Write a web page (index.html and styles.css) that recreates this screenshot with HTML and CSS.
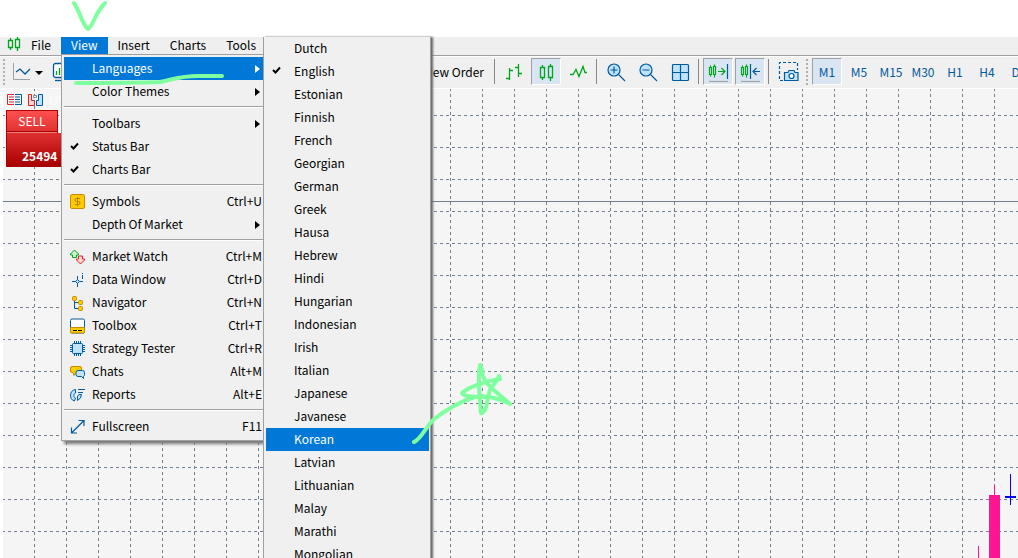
FILE: index.html
```html
<!DOCTYPE html>
<html lang="en">
<head>
<meta charset="utf-8">
<title>Trading Terminal</title>
<link rel="stylesheet" href="styles.css">
</head>
<body>
<div class="app">
  <nav class="menubar" aria-label="Main menu">
    <svg class="logo" width="14" height="14" viewBox="0 0 14 14" fill="none" stroke="#00a51d" stroke-width="1.300"><path d="M1.500 3.500h4v7h-4zM3.500 1v2.500M3.500 10.500V13M8.500 2.500h4v8h-4zM10.500 0v2.500M10.500 10.500V14"/></svg>
    <button class="top-item">File</button>
    <button class="top-item open">View</button>
    <button class="top-item">Insert</button>
    <button class="top-item">Charts</button>
    <button class="top-item">Tools</button>
  </nav>

  <div class="toolbar" role="toolbar" aria-label="Chart tools">
    <div class="tools-left">
      <span class="grip"></span>
      <button class="tool line-tool" aria-label="Chart type"><svg width="32" height="20" viewBox="0 0 32 20" fill="none"><path d="M2.500 1v16.500H19" stroke="#a0a0a0"/><path d="M5 10l4-3 5 5 5-5" stroke="#005a9e" stroke-width="1.300"/><path d="M24 9h8l-4 4z" fill="#000"/></svg></button>
      <button class="tool" aria-label="Indicators"><svg width="20" height="20" viewBox="0 0 20 20" fill="none" stroke="#005a9e" stroke-width="1.300"><rect x="1.500" y="1.500" width="15" height="14" rx="2" fill="#fff"/><path d="M3 18.500h13"/><path d="M4.500 13V9m3 4V6m3 7V9" stroke="#00a51d"/></svg></button>
      <button class="tool new-order">New Order</button>
    </div>
    <span class="sep"></span>
    <button class="tool" aria-label="Bar chart"><svg width="20" height="20" viewBox="0 0 20 20" fill="none" stroke="#00a51d" stroke-width="1.300"><path d="M5.500 6v12M2 16.500h3.500M5.500 8.500H9M14.500 2v13M11 5.500h3.500M14.500 11.500H18"/></svg></button>
    <button class="tool pressed" aria-label="Candlesticks"><svg width="20" height="20" viewBox="0 0 20 20" fill="none" stroke="#00a51d" stroke-width="1.300"><path d="M4.500 5.500h4v10h-4zM6.500 3v2.500M6.500 15.500V18M12.500 4.500h4v11h-4zM14.500 2v2.500M14.500 15.500V19"/></svg></button>
    <button class="tool" aria-label="Line chart"><svg width="20" height="20" viewBox="0 0 20 20" fill="none" stroke="#00a51d" stroke-width="1.300"><path d="M2 12.500h3l3-5 3 7 4-10 2 6h2"/></svg></button>
    <span class="sep"></span>
    <button class="tool" aria-label="Zoom in"><svg width="20" height="20" viewBox="0 0 20 20" fill="none" stroke="#005a9e" stroke-width="1.200"><circle cx="8" cy="8" r="6" fill="#bde3ff"/><path d="M12.500 12.500L19 19M4.500 8h7M8 4.500v7"/></svg></button>
    <button class="tool" aria-label="Zoom out"><svg width="20" height="20" viewBox="0 0 20 20" fill="none" stroke="#005a9e" stroke-width="1.200"><circle cx="8" cy="8" r="6" fill="#bde3ff"/><path d="M12.500 12.500L19 19M4.500 8h7"/></svg></button>
    <button class="tool" aria-label="Tile windows"><svg width="20" height="20" viewBox="0 0 20 20" fill="#bde3ff" stroke="#005a9e" stroke-width="1.200"><rect x="2.500" y="2.500" width="16" height="16" rx="1"/><path d="M10.500 2.500v16M2.500 10.500h16"/></svg></button>
    <span class="sep"></span>
    <button class="tool pressed" aria-label="Auto scroll"><svg width="22" height="20" viewBox="0 0 22 20" fill="none" stroke="#00a51d" stroke-width="1.200"><path d="M2.500 5.500h2v7h-2zM3.500 3.500v2M3.500 12.500v2M6.500 4.500h2v8h-2zM7.500 2.500v2M7.500 12.500v3M11 9.500h7M14.500 6l3.500 3.500-3.500 3.500"/><path d="M20.500 2v15" stroke="#005a9e"/><path d="M2 19.500h19" stroke="#a0a0a0"/></svg></button>
    <button class="tool pressed" aria-label="Chart shift"><svg width="22" height="20" viewBox="0 0 22 20" fill="none" stroke="#00a51d" stroke-width="1.200"><path d="M2.500 5.500h2v7h-2zM3.500 3.500v2M3.500 12.500v2M6.500 4.500h2v8h-2zM7.500 2.500v2M7.500 12.500v3"/><path d="M11.500 2v15M21 9.500h-7M17.500 6L14 9.500l3.500 3.500" stroke="#005a9e"/><path d="M2 19.500h19" stroke="#a0a0a0"/></svg></button>
    <span class="sep"></span>
    <button class="tool" aria-label="Screenshot"><svg width="22" height="22" viewBox="0 0 22 22" fill="none" stroke="#005a9e" stroke-width="1.200"><path d="M6 19.500H2.500v-18h18V9" stroke-dasharray="3 2"/><path d="M7.500 11.500H11l1-2h5l1 2h3v8H7.500z" fill="#bde3ff"/><circle cx="14.500" cy="15" r="2.500" fill="#fff"/></svg></button>
    <span class="grip"></span>
    <button class="tool frame pressed">M1</button>
    <button class="tool frame">M5</button>
    <button class="tool frame">M15</button>
    <button class="tool frame">M30</button>
    <button class="tool frame">H1</button>
    <button class="tool frame">H4</button>
    <button class="tool frame">D1</button>
  </div>

  <main class="chart">
    <svg class="plot" width="100%" height="100%" aria-hidden="true">
      <defs>
        <pattern id="grid" x="31" y="26" width="96" height="96" patternUnits="userSpaceOnUse">
          <path d="M.5 3v96M32.500 3v96M64.500 3v96" stroke="#708090" stroke-dasharray="3 3"/>
          <path d="M4 .5h96M4 32.500h96M4 64.500h96" stroke="#708090" stroke-dasharray="3 3"/>
        </pattern>
      </defs>
      <rect width="100%" height="100%" fill="url(#grid)"/>
      <path d="M0 112.500h4000" stroke="#708090"/>
      <path d="M975.500 457v100M991.500 396v12" stroke="#ff1493"/>
      <path d="M986 406h11v400h-11z" fill="#ff1493"/>
      <path d="M1007 385h1v31h-1zM1002 407h11v2h-11z" fill="#00f"/>
    </svg>
    <div class="chart-head">
      <svg width="15" height="12" viewBox="0 0 15 12" fill="none"><path d="M7 .5H.5v10H7M2 3h5M2 5.500h5M2 8h5" stroke="#d8262c"/><path d="M8 .5h6.500v10H8M8 3h5M8 5.500h5M8 8h5" stroke="#005a9e"/></svg>
      <svg width="15" height="12" viewBox="0 0 15 12"><path d="M.5.5h3v6h3v5h-6z" fill="#ffd5d0" stroke="#d8262c"/><path d="M14.500.5h-4v6h-2v5h6z" fill="#bde3ff" stroke="#005a9e"/><path d="M5.500 1.500h3v2h-3z" fill="#fff" stroke="#888"/></svg>
      <span class="symbol">US</span>
    </div>
    <button class="sell"><span class="sell-tab">SELL</span><span class="sell-price">25494</span></button>
  </main>

  <div class="menu view-menu" role="menu" aria-label="View">
    <button class="item active" role="menuitem"><i></i><span>Languages</span><b class="arrow"></b></button>
    <button class="item" role="menuitem"><i></i><span>Color Themes</span><b class="arrow"></b></button>
    <hr>
    <button class="item" role="menuitem"><i></i><span>Toolbars</span><b class="arrow"></b></button>
    <button class="item" role="menuitem"><i class="tick"><svg width="9" height="9" viewBox="0 0 9 9"><path d="M1 4l2.500 2.500L8 1.500" fill="none" stroke="#000" stroke-width="2"/></svg></i><span>Status Bar</span></button>
    <button class="item" role="menuitem"><i class="tick"><svg width="9" height="9" viewBox="0 0 9 9"><path d="M1 4l2.500 2.500L8 1.500" fill="none" stroke="#000" stroke-width="2"/></svg></i><span>Charts Bar</span></button>
    <hr>
    <button class="item" role="menuitem"><i><svg width="16" height="16" viewBox="0 0 16 16"><rect x=".5" y=".5" width="14" height="14" rx="1.500" fill="#fc0" stroke="#c88a00"/><path d="M10 4.500H6.500q-1.500 0-1.500 1.500t1.500 1.500h2q1.500 0 1.500 1.500t-1.500 1.500H5M7.500 3v9.500" fill="none" stroke="#b87a00"/></svg></i><span>Symbols</span><kbd>Ctrl+U</kbd></button>
    <button class="item" role="menuitem"><i></i><span>Depth Of Market</span><b class="arrow"></b></button>
    <hr>
    <button class="item" role="menuitem"><i><svg width="16" height="16" viewBox="0 0 16 16"><path d="M4.500 1L.5 5v1h2v2.500h4V6h2V5z" fill="#c9f2ce" stroke="#00a51d"/><path d="M10.500 15l-4-4v-1h2V7h4v3h2v1z" fill="#ffd5d0" stroke="#d8262c"/></svg></i><span>Market Watch</span><kbd>Ctrl+M</kbd></button>
    <button class="item" role="menuitem"><i><svg width="16" height="16" viewBox="0 0 16 16" fill="none" stroke="#005a9e"><path d="M7.500 4v11M2 9.500h11M12.500 3v4M12.500 1v1"/><path d="M7.500 7.500l2 2-2 2-2-2z" fill="#bde3ff"/></svg></i><span>Data Window</span><kbd>Ctrl+D</kbd></button>
    <button class="item" role="menuitem"><i><svg width="16" height="16" viewBox="0 0 16 16"><path d="M4.500 5v8.500H9M4.500 7.500H9" fill="none" stroke="#005a9e"/><g fill="#fc0" stroke="#c88a00"><rect x="2.500" y="1.500" width="4" height="4" rx="1"/><rect x="8.500" y="5.500" width="4" height="4" rx="1"/><rect x="8.500" y="11.500" width="4" height="4" rx="1"/></g></svg></i><span>Navigator</span><kbd>Ctrl+N</kbd></button>
    <button class="item" role="menuitem"><i><svg width="16" height="16" viewBox="0 0 16 16"><rect x=".5" y="1" width="14" height="14" rx="1.500" fill="#fff" stroke="#005a9e"/><path d="M.5 9.500h14V14q0 1-1 1h-12q-1 0-1-1z" fill="#fc0" stroke="#c88a00"/><path d="M3 12.500h4M8 12.500h4" stroke="#000"/></svg></i><span>Toolbox</span><kbd>Ctrl+T</kbd></button>
    <button class="item" role="menuitem"><i><svg width="16" height="16" viewBox="0 0 16 16" stroke="#005a9e"><path d="M4.500 0v15M6.500 0v15M8.500 0v15M10.500 0v15M0 4.500h15M0 6.500h15M0 8.500h15M0 10.500h15"/><rect x="2.500" y="2.500" width="10" height="10" rx="1" fill="#bde3ff"/></svg></i><span>Strategy Tester</span><kbd>Ctrl+R</kbd></button>
    <button class="item" role="menuitem"><i><svg width="16" height="16" viewBox="0 0 16 16"><path d="M2 2.500h8q1.500 0 1.500 1.500v3Q11.500 8.500 10 8.500H6l-2 3-1-3H2Q.5 8.500.5 7V4Q.5 2.500 2 2.500z" fill="#fc0" stroke="#c88a00"/><path d="M8 6.500h4.500q2 0 2 2v2q0 1.500-1 2v2l-2-2H8q-2 0-2-2v-2q0-2 2-2z" fill="#bde3ff" stroke="#005a9e"/></svg></i><span>Chats</span><kbd>Alt+M</kbd></button>
    <button class="item" role="menuitem"><i><svg width="16" height="16" viewBox="0 0 16 16" fill="#bde3ff" stroke="#005a9e"><path d="M5.500 2.500C-1 3-1 13 4.500 14l1-3C3 10 3.500 7 5.500 6zM7.500 13.500V9q1-2 4-1.500 0 4-4 6z"/><path d="M8 2.500h7M8 5.500h5" fill="none"/></svg></i><span>Reports</span><kbd>Alt+E</kbd></button>
    <hr>
    <button class="item" role="menuitem"><i><svg width="16" height="16" viewBox="0 0 16 16" fill="none" stroke="#005a9e" stroke-width="1.200"><path d="M2 13.500L13.500 2M8.500 1.500H14V7M1.500 8.500V14H7"/></svg></i><span>Fullscreen</span><kbd>F11</kbd></button>
  </div>

  <div class="menu language-menu" role="menu" aria-label="Languages">
    <button class="item" role="menuitem">Dutch</button>
    <button class="item checked" role="menuitem"><svg width="9" height="9" viewBox="0 0 9 9"><path d="M1 4l2.500 2.500L8 1.500" fill="none" stroke="#000" stroke-width="2"/></svg>English</button>
    <button class="item" role="menuitem">Estonian</button>
    <button class="item" role="menuitem">Finnish</button>
    <button class="item" role="menuitem">French</button>
    <button class="item" role="menuitem">Georgian</button>
    <button class="item" role="menuitem">German</button>
    <button class="item" role="menuitem">Greek</button>
    <button class="item" role="menuitem">Hausa</button>
    <button class="item" role="menuitem">Hebrew</button>
    <button class="item" role="menuitem">Hindi</button>
    <button class="item" role="menuitem">Hungarian</button>
    <button class="item" role="menuitem">Indonesian</button>
    <button class="item" role="menuitem">Irish</button>
    <button class="item" role="menuitem">Italian</button>
    <button class="item" role="menuitem">Japanese</button>
    <button class="item" role="menuitem">Javanese</button>
    <button class="item active" role="menuitem">Korean</button>
    <button class="item" role="menuitem">Latvian</button>
    <button class="item" role="menuitem">Lithuanian</button>
    <button class="item" role="menuitem">Malay</button>
    <button class="item" role="menuitem">Marathi</button>
    <button class="item" role="menuitem">Mongolian</button>
  </div>

  <svg class="marks" width="520" height="450" fill="none" stroke="#80ff9f" stroke-width="4" stroke-linecap="round" stroke-linejoin="round" aria-hidden="true">
    <path d="M74 3C79 10 83 26 88 29C93 27 94 14 105 3"/>
    <path d="M76 83C105 83 135 83 160 82C175 79 180 76 198 76H222"/>
    <path d="M414 442C420 440 424 430 433 420C448 408 462 401 475 397C484 395 494 396 510 404C498 393 486 386 483 376C482 370 481 364 480 365C478 374 479 390 480 402C481 410 480 414 482 413C487 411 486 402 490 390C493 384 498 381 499 376L500 379C485 381 467 388 462 393C465 398 475 396 487 397"/>
  </svg>
</div>
</body>
</html>
```
FILE: styles.css
```css
* { box-sizing: border-box; }
body { margin: 0; }
button {
  margin: 0; padding: 0; border: 0; background: none; color: inherit;
  font: inherit; text-align: left; white-space: nowrap;
}
svg { display: block; flex: none; }
.app {
  position: relative; display: flex; flex-direction: column;
  height: 100vh; padding-top: 37px; overflow: hidden;
  background: #fff; color: #000;
  font: 12px/16px "Noto Sans CJK KR", "Noto Sans", sans-serif;
}
.menubar {
  display: flex; flex: none; align-items: flex-start; height: 19px; padding-left: 7px;
  background: #efefef; border-bottom: 1px solid #a0a0a0;
}
.top-item { height: 17px; padding: 0 10px 2px; }
.top-item.open { background: #0078d7; color: #fff; }

.toolbar {
  display: flex; flex: none; align-items: center; gap: 2px; height: 33px; padding-bottom: 2px;
  background: #f0f0f0; border-top: 1px solid #fff; border-bottom: 1px solid #fff;
}
.tools-left { display: flex; flex: none; align-items: center; gap: 4px; width: 491px; padding-left: 2px; }
.new-order.tool { width: auto; margin-left: auto; padding-right: 6px; }
.tool {
  display: flex; flex: none; align-items: center; justify-content: center;
  width: 30px; height: 27px; border: 1px solid transparent;
}
.line-tool { width: 32px; }
.pressed { background: #d9e5f3; border-color: #a0a0a0 #fff #fff #a0a0a0; }
.frame { color: #005a9e; }
.sep { flex: none; width: 4px; height: 25px; background: linear-gradient(90deg, transparent 1px, #888 1px, #888 2px, transparent 2px); }
.grip { flex: none; width: 5px; height: 26px; background: repeating-linear-gradient(#b0b0b0 0 2px, #f0f0f0 2px 4px) 1px 0 / 2px 100% no-repeat; }

.chart { position: relative; flex: 1; min-height: 0; background: #f5f5f5; border-left: 3px solid #fff; overflow: hidden; }
.plot { position: absolute; inset: 0; }
.chart-head { position: relative; display: flex; align-items: center; gap: 6px; height: 21px; padding-left: 4px; }
.symbol { color: #fff; }
.sell { position: relative; display: flex; flex-direction: column; margin-left: 3px; color: #fff; }
.sell-tab {
  width: 52px; height: 23px; padding-top: 2px; text-align: center;
  background: linear-gradient(#ff5050, #df3030); border: 1px solid #b00000; border-bottom: 0;
  box-shadow: inset 0 -1px #ee8080, inset 0 -2px #a80000;
}
.sell-price {
  width: 90px; height: 34px; padding: 15px 0 0 15px; font-weight: 700;
  background: linear-gradient(#df3030, #a80000); border: 1px solid #a80000; border-top: 0;
}

.menu { position: absolute; display: flex; flex-direction: column; background: #f0f0f0; border: 1px solid #a0a0a0; }
.view-menu { top: 54px; left: 61px; width: 230px; padding: 2px; box-shadow: 3px 3px 3px #777; }
.language-menu { top: 37px; left: 263px; width: 168px; padding: 0 1px 0 2px; border-top: 0; box-shadow: 2px 0 2px #666; }
.item { display: flex; flex: none; align-items: center; height: 23px; }
.item.active { background: #0078d7; color: #fff; }
.view-menu .item { padding-right: 26px; }
.view-menu i { display: flex; align-items: center; flex: none; width: 28px; padding-left: 6px; }
.item span { flex: 1; padding-bottom: 2px; }
.item kbd { padding-bottom: 2px; font: inherit; }
.arrow { border: 4px solid transparent; border-left: 5px solid #000; border-right: 0; }
.active .arrow { border-left-color: #fff; }
.view-menu .item:has(.arrow) { padding-right: 28px; }
.menu hr { flex: none; width: 100%; height: 2px; margin: 3px 0 4px; border: 0; background: linear-gradient(#a0a0a0 1px, #fff 1px); }
.language-menu .item { padding-bottom: 2px; padding-left: 28px; }
.language-menu .checked { gap: 13px; padding-left: 6px; }
.marks { position: absolute; top: 0; left: 0; pointer-events: none; }
```
